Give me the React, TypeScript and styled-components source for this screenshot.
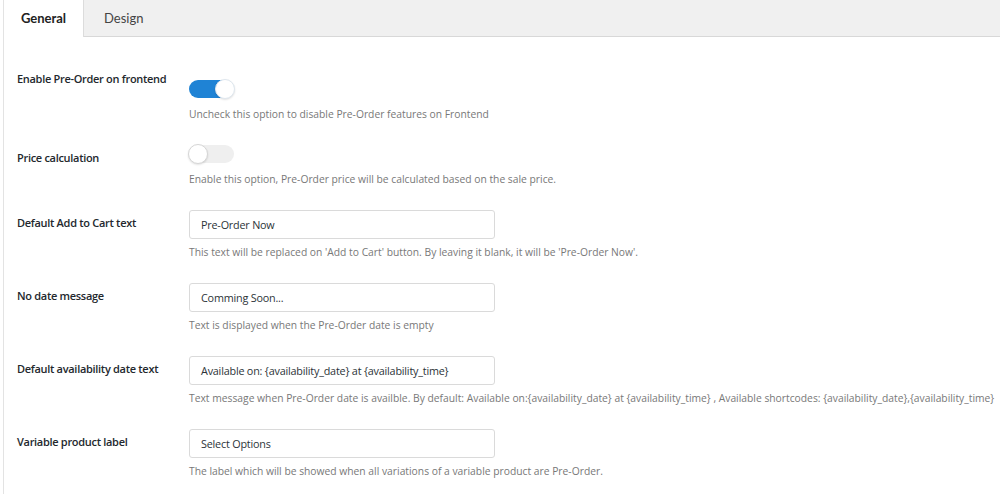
import React from "react";
import styled, { createGlobalStyle } from "styled-components";

const Global = createGlobalStyle`
  html, body { margin: 0; padding: 0; background: #fff; }
  body { font-family: "Open Sans", "Noto Sans", sans-serif; color: #23282d; }
  * { box-sizing: border-box; }
`;

const Wrapper = styled.div`
  margin-left: 3px;
  border-left: 1px solid #e3e3e3;
  min-height: 494px;
  background: #fff;
`;

const TabBar = styled.div`
  display: flex;
  height: 37px;
  background: #f0f0f0;
  border-bottom: 1px solid #d8d8d8;
`;

const Tab = styled.div<{ $active?: boolean }>`
  display: flex;
  align-items: center;
  justify-content: center;
  padding: 0 ${(p) => (p.$active ? "18px" : "20px")};
  width: ${(p) => (p.$active ? "80px" : "auto")};
  height: ${(p) => (p.$active ? "37px" : "36px")};
  font-family: Lato, "Open Sans", sans-serif;
  font-size: 13px;
  font-weight: ${(p) => (p.$active ? 700 : 400)};
  color: ${(p) => (p.$active ? "#222" : "#444")};
  background: ${(p) => (p.$active ? "#fff" : "transparent")};
  border-right: ${(p) => (p.$active ? "1px solid #dcdcdc" : "none")};
  padding-bottom: 1px;
`;

const Content = styled.div`
  padding: 29px 0 0 13px;
  display: flex;
  flex-direction: column;
  gap: 23px;
`;

const Row = styled.div`
  display: grid;
  grid-template-columns: 172px 1fr;
`;

const Label = styled.div`
  font-family: "Open Sans", sans-serif;
  font-size: 11px;
  font-weight: 600;
  letter-spacing: -0.3px;
  line-height: 16px;
  padding-top: 5px;
  color: #23282d;
  white-space: nowrap;
`;

const Field = styled.div<{ $offset?: number }>`
  display: flex;
  flex-direction: column;
  align-items: flex-start;
  padding-top: ${(p) => p.$offset ?? 0}px;
`;

const Track = styled.div<{ $on?: boolean }>`
  position: relative;
  width: 45px;
  height: 18px;
  border-radius: 9px;
  background: ${(p) => (p.$on ? "#1f83d5" : "#efefef")};
  margin-bottom: 8px;
`;

const Knob = styled.span<{ $on?: boolean }>`
  position: absolute;
  top: -1px;
  ${(p) => (p.$on ? "right: -1px;" : "left: -1px;")}
  width: 20px;
  height: 20px;
  border-radius: 50%;
  background: #fff;
  border: 1px solid ${(p) => (p.$on ? "#dfe7ee" : "#d6d6d6")};
  box-shadow: 0 1px 2px rgba(0, 0, 0, 0.12);
`;

const Input = styled.div`
  width: 306px;
  height: 29px;
  border: 1px solid #dadada;
  border-radius: 3px;
  padding: 0 11px;
  display: flex;
  align-items: center;
  font-family: "Open Sans", sans-serif;
  font-size: 10.8px;
  letter-spacing: -0.2px;
  color: #2c3338;
  margin-bottom: 5px;
  white-space: nowrap;
`;

const Desc = styled.div`
  font-family: "Open Sans", sans-serif;
  font-size: 10.3px;
  line-height: 16px;
  color: #787878;
  white-space: nowrap;
`;

type Item =
  | { label: string; kind: "toggle"; on: boolean; desc: string; offset?: number }
  | { label: string; kind: "input"; value: string; desc: string; offset?: number };

const items: Item[] = [
  {
    label: "Enable Pre-Order on frontend",
    kind: "toggle",
    on: true,
    desc: "Uncheck this option to disable Pre-Order features on Frontend",
    offset: 14,
  },
  {
    label: "Price calculation",
    kind: "toggle",
    on: false,
    desc: "Enable this option, Pre-Order price will be calculated based on the sale price.",
  },
  {
    label: "Default Add to Cart text",
    kind: "input",
    value: "Pre-Order Now",
    desc: "This text will be replaced on 'Add to Cart' button. By leaving it blank, it will be 'Pre-Order Now'.",
  },
  {
    label: "No date message",
    kind: "input",
    value: "Comming Soon...",
    desc: "Text is displayed when the Pre-Order date is empty",
  },
  {
    label: "Default availability date text",
    kind: "input",
    value: "Available on: {availability_date} at {availability_time}",
    desc: "Text message when Pre-Order date is availble. By default: Available on:{availability_date} at {availability_time} , Available shortcodes: {availability_date},{availability_time}",
  },
  {
    label: "Variable product label",
    kind: "input",
    value: "Select Options",
    desc: "The label which will be showed when all variations of a variable product are Pre-Order.",
  },
];

export default function App() {
  return (
    <>
      <Global />
      <Wrapper>
        <TabBar>
          <Tab $active>General</Tab>
          <Tab>Design</Tab>
        </TabBar>
        <Content>
          {items.map((it) => (
            <Row key={it.label}>
              <Label>{it.label}</Label>
              <Field $offset={it.offset}>
                {it.kind === "toggle" ? (
                  <Track $on={it.on}>
                    <Knob $on={it.on} />
                  </Track>
                ) : (
                  <Input>{it.value}</Input>
                )}
                <Desc>{it.desc}</Desc>
              </Field>
            </Row>
          ))}
        </Content>
      </Wrapper>
    </>
  );
}
